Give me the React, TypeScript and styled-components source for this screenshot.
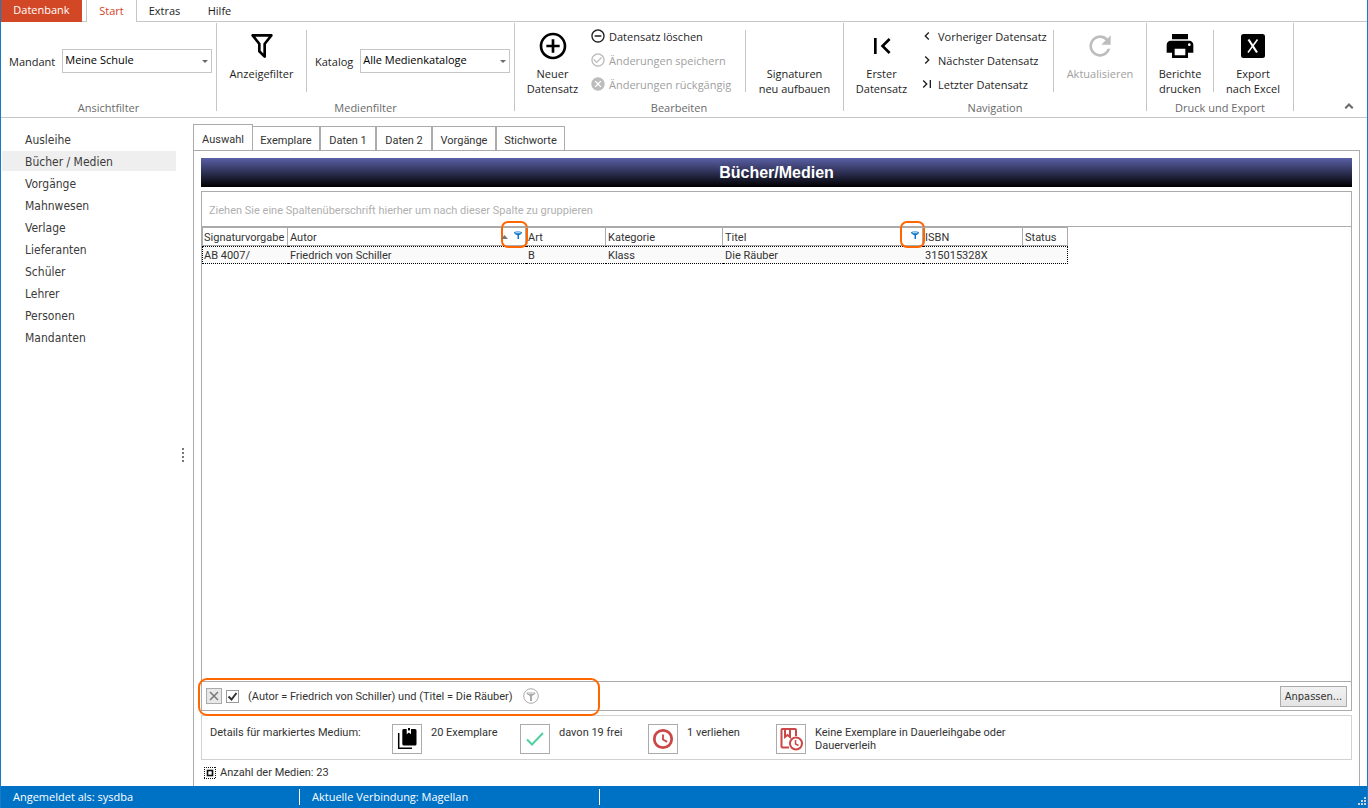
import React from "react";
import styled, { createGlobalStyle, css } from "styled-components";

const uiFont = `"Open Sans", "Noto Sans", sans-serif`;
const navFont = `"DejaVu Sans Condensed", "Noto Sans", sans-serif`;
const gridFont = `Roboto, "Noto Sans", sans-serif`;
const line = "#ababab";
const ribbonLine = "#c6c6c6";
const orange = "#ff6600";

const GlobalStyle = createGlobalStyle`
  * { box-sizing: border-box; }
  body { margin: 0; background: #fff; }
  button, select, input { font: inherit; color: inherit; margin: 0; }
`;

/* ---------- shell ---------- */

const Window = styled.div`
  display: flex;
  flex-direction: column;
  min-height: 100vh;
  border: solid #1979ca;
  border-width: 0 1px;
  background: #fff;
  color: #1e1e1e;
  font: 11px/15px ${uiFont};
`;

const TabStrip = styled.nav`
  display: flex;
  height: 22px;
  border-bottom: 1px solid ${ribbonLine};
`;

const FileButton = styled.button`
  width: 81px;
  height: 22px;
  margin-right: 4px;
  padding: 0 0 4px;
  border: 0;
  background: #d24726;
  color: #fff;
`;

const RibbonTab = styled.button<{ $active?: boolean }>`
  width: ${(p) => (p.$active ? 51 : 55)}px;
  height: ${(p) => (p.$active ? 22 : 21)}px;
  padding: 0;
  border: 0;
  background: #fff;
  ${(p) =>
    p.$active &&
    css`
      padding-bottom: 1px;
      border: solid ${ribbonLine};
      border-width: 0 1px;
      color: #d24726;
    `}
`;

/* ---------- ribbon ---------- */

const Ribbon = styled.section`
  display: flex;
  height: 96px;
  padding-top: 1px;
  border-bottom: 1px solid ${ribbonLine};
`;

const RibbonGroup = styled.div<{ $width: number }>`
  display: flex;
  flex-direction: column;
  width: ${(p) => p.$width}px;
  height: 88px;
  border-right: 1px solid ${ribbonLine};
`;

const GroupBody = styled.div`
  display: flex;
  flex: none;
  height: 76px;
  padding-top: 7px;
`;

const GroupTitle = styled.div`
  line-height: 18px;
  text-align: center;
  color: #6a6a6a;
`;

const Divider = styled.div`
  width: 1px;
  height: 62px;
  background: ${ribbonLine};
`;

const Field = styled.label`
  display: flex;
  align-items: center;
  gap: 7px;
  height: 62px;
  padding-left: 8px;
`;

const SelectWrap = styled.span`
  position: relative;
  display: block;
  &::after {
    content: "";
    position: absolute;
    right: 4px;
    top: 11px;
    border: 3px solid transparent;
    border-top-color: #6a6a6a;
    border-bottom: 0;
    pointer-events: none;
  }
`;

const Select = styled.select`
  display: block;
  appearance: none;
  width: 150px;
  height: 24px;
  padding: 0 14px 3px 2px;
  border: 1px solid ${ribbonLine};
  border-radius: 0;
  background: #fff;
  color: #000;
`;

const BigButton = styled.button<{ $width: number }>`
  display: flex;
  flex-direction: column;
  align-items: center;
  gap: 4px;
  width: ${(p) => p.$width}px;
  padding: 0;
  border: 0;
  background: none;
  white-space: nowrap;
  &:disabled { color: #a0a0a0; }
  svg { flex: none; color: #000; }
`;

const IconSpace = styled.span`
  height: 32px;
`;

const SmallStack = styled.div<{ $width: number }>`
  display: flex;
  flex-direction: column;
  width: ${(p) => p.$width}px;
  margin-top: -6px;
`;

const SmallButton = styled.button`
  display: flex;
  align-items: center;
  gap: 3px;
  height: 24px;
  padding: 0;
  border: 0;
  background: none;
  white-space: nowrap;
  svg { flex: none; }
  &:disabled { color: #a0a0a0; }
  &:disabled svg { color: #bdbdbd; }
`;

const CollapseButton = styled.button`
  align-self: flex-end;
  margin: 0 9px 2px auto;
  padding: 0;
  border: 0;
  background: none;
  color: #6a6a6a;
  line-height: 0;
`;

/* ---------- main ---------- */

const Main = styled.main`
  display: flex;
  flex: 1;
`;

const Sidebar = styled.nav`
  width: 175px;
  padding: 11px 0 0 1px;
  font: 12px/20px ${navFont};
`;

const SideLink = styled.a<{ $active?: boolean }>`
  display: block;
  height: 20px;
  margin-bottom: 2px;
  padding: 1px 0 0 23px;
  background: ${(p) => (p.$active ? "#efefef" : "none")};
  color: #3b3b3b;
  text-decoration: none;
`;

const Splitter = styled.div`
  display: flex;
  flex-direction: column;
  align-items: center;
  justify-content: center;
  gap: 2px;
  width: 17px;
  padding: 6px 4px 0 0;
`;

const Dot = styled.i`
  width: 2px;
  height: 2px;
  background: #777;
`;

const Content = styled.section`
  display: flex;
  flex: 1;
  flex-direction: column;
  min-width: 0;
  margin-right: 7px;
  padding-top: 6px;
  color: #333;
  font: 11px/13px ${gridFont};
`;

const Tabs = styled.div`
  display: flex;
  align-items: flex-end;
  height: 26px;
`;

const Tab = styled.button<{ $width: number; $active?: boolean }>`
  width: ${(p) => p.$width}px;
  height: 25px;
  margin-bottom: -1px;
  padding: 3px 0 0;
  border: 1px solid ${line};
  background: #fff;
  ${(p) =>
    p.$active &&
    css`
      height: 27px;
      margin-right: -1px;
      border-bottom-color: #fff;
    `}
`;

const Panel = styled.div`
  display: flex;
  flex: 1;
  flex-direction: column;
  padding: 7px 7px 0;
  border: 1px solid ${line};
  border-bottom: 0;
`;

const Title = styled.h1`
  margin: 0 0 4px;
  height: 29px;
  background: linear-gradient(#5a60a6, #000);
  color: #fff;
  font: bold 16px/29px "Liberation Sans", Arial, sans-serif;
  text-align: center;
`;

const Grid = styled.div`
  display: flex;
  flex: 1;
  flex-direction: column;
  border: 1px solid ${line};
`;

const GroupHint = styled.div`
  height: 35px;
  padding-left: 7px;
  border-bottom: 1px solid ${line};
  color: #b0b0b0;
  line-height: 37px;
`;

const Table = styled.table`
  width: 866px;
  border-collapse: separate;
  border-spacing: 0;
  table-layout: fixed;
`;

const HeadCell = styled.th<{ $width: number }>`
  position: relative;
  width: ${(p) => p.$width}px;
  height: 19px;
  padding: 1px 0 0 2px;
  border: solid ${line};
  border-width: 1px 1px 1px 0;
  font-weight: normal;
  text-align: left;
  white-space: nowrap;
  &:first-child { padding-left: 1px; border-left-width: 1px; }
`;

const Cell = styled.td`
  height: 18px;
  padding: 0 0 0 2px;
  border: 1px dotted #000;
  border-width: 1px 0;
  background: #fafafa;
  white-space: nowrap;
  &:first-child { padding-left: 1px; border-left-width: 1px; }
  &:last-child { border-right-width: 1px; }
`;

const HeadTools = styled.span<{ $wide?: boolean }>`
  position: absolute;
  right: -3px;
  top: -7px;
  display: flex;
  align-items: center;
  justify-content: flex-end;
  gap: 6px;
  width: ${(p) => (p.$wide ? 27 : 25)}px;
  height: 27px;
  padding-right: 4px;
  border: 2px solid ${orange};
  border-radius: 7px;
  svg { flex: none; }
`;

const SortMark = styled.svg`
  margin-top: 4px;
`;

const FilterButton = styled.button`
  padding: 0;
  border: 0;
  background: none;
  line-height: 0;
`;

const FilterBar = styled.div`
  position: relative;
  display: flex;
  align-items: center;
  height: 29px;
  margin-top: auto;
  padding: 0 4px;
  border-top: 1px solid ${line};
`;

const Highlight = styled.span`
  position: absolute;
  left: -4px;
  top: -4px;
  width: 402px;
  height: 38px;
  border: 2px solid ${orange};
  border-radius: 9px;
  pointer-events: none;
`;

const ClearButton = styled.button`
  width: 16px;
  height: 16px;
  margin-right: 4px;
  padding: 0 0 0 2px;
  border: 1px solid ${line};
  background: #e8e8e8;
  line-height: 0;
  text-align: left;
`;

const Check = styled.input`
  appearance: none;
  width: 13px;
  height: 13px;
  border: 1px solid #9a9a9a;
  background: #fff
    url("data:image/svg+xml,%3Csvg xmlns='http://www.w3.org/2000/svg' viewBox='0 0 11 11'%3E%3Cpath d='M1.5 5.5l3 3 5-6.5' fill='none' stroke='%23333' stroke-width='2'/%3E%3C/svg%3E");
`;

const FilterText = styled.label`
  display: flex;
  align-items: center;
  gap: 9px;
  margin-right: 10px;
`;

const CustomizeButton = styled.button`
  width: 67px;
  height: 21px;
  margin-left: auto;
  padding: 0;
  border: 1px solid ${line};
  background: linear-gradient(#f2f2f2, #e4e4e4);
  font-family: ${navFont};
`;

const Details = styled.div`
  display: flex;
  height: 45px;
  margin-top: 4px;
  padding: 8px;
  border: 1px solid #d2d2d2;
`;

const DetailsLabel = styled.span`
  width: 182px;
  padding-top: 2px;
`;

const DetailItem = styled.div<{ $width: number }>`
  display: flex;
  gap: 9px;
  width: ${(p) => p.$width}px;
`;

const DetailIcon = styled.span`
  display: flex;
  flex: none;
  align-items: center;
  justify-content: center;
  width: 30px;
  height: 30px;
  border: 1px solid ${line};
`;

const DetailText = styled.span`
  padding-top: 2px;
`;

const Count = styled.div`
  display: flex;
  align-items: center;
  gap: 4px;
  margin-bottom: 2px;
  height: 24px;
  padding-left: 2px;
`;

const StatusBar = styled.footer`
  display: flex;
  height: 22px;
  padding: 3px 0;
  background: #0072c6;
  color: #fff;
  line-height: 15px;
`;

const StatusCell = styled.span<{ $width: number }>`
  width: ${(p) => p.$width}px;
  padding-left: 12px;
  border-right: 1px solid #fff;
`;

const Grip = styled.svg`
  align-self: flex-end;
  margin: 0 1px 0 auto;
`;

/* ---------- icons ---------- */

const paths = {
  filter:
    "M15 19.88c.04.3-.06.62-.29.83a1 1 0 0 1-1.41 0L9.29 16.7a1 1 0 0 1-.29-.83v-5.12L4.21 4.62A1 1 0 0 1 4.38 3.22C4.57 3.08 4.78 3 5 3h14c.22 0 .43.08.62.22a1 1 0 0 1 .17 1.4L15 10.75zM7.04 5L11 10.06v5.52l2 2v-7.53L16.96 5z",
  add: "M13 7h-2v4H7v2h4v4h2v-4h4v-2h-4V7zm-1-5C6.48 2 2 6.48 2 12s4.48 10 10 10 10-4.48 10-10S17.52 2 12 2zm0 18c-4.41 0-8-3.59-8-8s3.59-8 8-8 8 3.59 8 8-3.59 8-8 8z",
  remove:
    "M7 11v2h10v-2H7zm5-9C6.48 2 2 6.48 2 12s4.48 10 10 10 10-4.48 10-10S17.52 2 12 2zm0 18c-4.41 0-8-3.59-8-8s3.59-8 8-8 8 3.59 8 8-3.59 8-8 8z",
  check:
    "M16.59 7.58L10 14.17l-3.59-3.58L5 12l5 5 8-8zM12 2C6.48 2 2 6.48 2 12s4.48 10 10 10 10-4.48 10-10S17.52 2 12 2zm0 18c-4.42 0-8-3.58-8-8s3.58-8 8-8 8 3.58 8 8-3.58 8-8 8z",
  cancel:
    "M12 2C6.47 2 2 6.47 2 12s4.47 10 10 10 10-4.47 10-10S17.53 2 12 2zm5 13.59L15.59 17 12 13.41 8.41 17 7 15.59 10.59 12 7 8.41 8.41 7 12 10.59 15.59 7 17 8.41 13.41 12z",
  first: "M18.41 16.59L13.82 12l4.59-4.59L17 6l-6 6 6 6zM6 6h2v12H6z",
  last: "M5.59 7.41L10.18 12l-4.59 4.59L7 18l6-6-6-6zM16 6h2v12h-2z",
  prev: "M15.41 7.41L14 6l-6 6 6 6 1.41-1.41L10.83 12z",
  next: "M10 6L8.59 7.41 13.17 12l-4.58 4.59L10 18l6-6z",
  up: "M12 8l-6 6 2 2 4-4 4 4 2-2z",
  refresh:
    "M17.65 6.35A7.96 7.96 0 0 0 12 4a8 8 0 1 0 7.73 10h-2.08A6 6 0 1 1 12 6c1.66 0 3.14.69 4.22 1.78L13 11h7V4z",
  print:
    "M19 8H5c-1.66 0-3 1.34-3 3v6h4v4h12v-4h4v-6c0-1.66-1.34-3-3-3zm-3 11H8v-5h8v5zm3-7c-.55 0-1-.45-1-1s.45-1 1-1 1 .45 1 1-.45 1-1 1zm-1-9H6v4h12V3z",
  clock:
    "M12 1a11 11 0 1 0 0 22 11 11 0 0 0 0-22zm0 19a8 8 0 1 1 0-16 8 8 0 0 1 0 16zM11 7v6l5 3 1-1.7-4-2.3V7z",
};

const Icon = ({ name, size, color }: { name: keyof typeof paths; size: number; color?: string }) => (
  <svg width={size} height={size} viewBox="0 0 24 24" fill={color ?? "currentColor"} fillRule="evenodd" aria-hidden>
    <path d={paths[name]} />
  </svg>
);

const ExcelIcon = () => (
  <svg width="32" height="32" viewBox="0 0 32 32" aria-hidden>
    <rect x="4" y="4" width="24" height="24" rx="2.5" fill="#000" />
    <path d="M11.5 9.500l8.500 13" stroke="#fff" strokeWidth="2.2" fill="none" />
    <path d="M20.5 9.500l-9.500 13" stroke="#fff" strokeWidth="1.5" fill="none" />
  </svg>
);

const BooksIcon = () => (
  <svg width="22" height="22" viewBox="0 0 22 22" aria-hidden>
    <path d="M2.700 5v15.200H16" stroke="#000" strokeWidth="1.5" fill="none" />
    <path d="M7.500 1H19a1.500 1.500 0 0 1 1.500 1.500v13.500a1.500 1.500 0 0 1-1.500 1.500H8A1.700 1.700 0 0 1 6.300 16V2.500A1.500 1.500 0 0 1 7.500 1z" />
    <path d="M10.700 1h4.300v5.300l-2.150-1.800-2.150 1.800z" fill="#fff" />
    <path d="M12 0h2v2.500h-2z" />
  </svg>
);

const TickIcon = () => (
  <svg width="20" height="16" viewBox="0 0 20 16" aria-hidden>
    <path d="M2 8.500l5 5L18 2" stroke="#4fd0a0" strokeWidth="2" fill="none" />
  </svg>
);

const LoanIcon = () => (
  <svg width="24" height="24" viewBox="0 0 24 24" fill="none" stroke="#cc4747" strokeWidth="2" aria-hidden>
    <path d="M10 20.500H3.500a1 1 0 0 1-1-1V3a1 1 0 0 1 1-1H16a1 1 0 0 1 1 1v6" />
    <path d="M6 2v8l2.500-2L11 10V2" />
    <circle cx="17" cy="16.500" r="6" />
    <path d="M16.500 13v4l3 1.500" strokeWidth="1.5" />
  </svg>
);

const FunnelIcon = () => (
  <svg width="8" height="8" viewBox="0 0 8 8" aria-hidden>
    <path d="M0 1.500C0 .3 8 .3 8 1.500 8 3 5 4 5 4.500V8H3.500V4.500C3.500 4 0 3 0 1.500z" fill="#0f78c8" />
    <path d="M1.500 1.700h5" stroke="#fff" strokeWidth=".8" />
  </svg>
);

const FunnelBadge = () => (
  <svg width="16" height="16" viewBox="0 0 16 16" aria-hidden>
    <circle cx="8" cy="8" r="7.300" fill="#fff" stroke="#aaa" />
    <path d="M3.500 5c0-1.500 9-1.500 9 0 0 1.500-3.500 2.500-3.500 3.500V13H7V8.500C7 7.500 3.500 6.500 3.500 5z" fill="#aaa" />
    <path d="M5 5h6" stroke="#fff" />
  </svg>
);

const CountIcon = () => (
  <svg width="13" height="13" viewBox="0 0 13 13" fill="none" stroke="#111" aria-hidden>
    <path d="M1 1.500h12M1 12.500h12M1.500 1v12M12.500 1v12" strokeDasharray="1 1" shapeRendering="crispEdges" />
    <rect x="4.5" y="4.5" width="5" height="5" strokeWidth="1.6" />
  </svg>
);

/* ---------- data ---------- */

const sideItems = ["Ausleihe", "Bücher / Medien", "Vorgänge", "Mahnwesen", "Verlage", "Lieferanten", "Schüler", "Lehrer", "Personen", "Mandanten"];

const tabs: [string, number][] = [
  ["Auswahl", 60],
  ["Exemplare", 68],
  ["Daten 1", 56],
  ["Daten 2", 56],
  ["Vorgänge", 64],
  ["Stichworte", 69],
];

const columns: { name: string; width: number; value: string; filtered?: boolean; sorted?: boolean }[] = [
  { name: "Signaturvorgabe", width: 86, value: "AB 4007/" },
  { name: "Autor", width: 238, value: "Friedrich von Schiller", filtered: true, sorted: true },
  { name: "Art", width: 80, value: "B" },
  { name: "Kategorie", width: 117, value: "Klass" },
  { name: "Titel", width: 200, value: "Die Räuber", filtered: true },
  { name: "ISBN", width: 100, value: "315015328X" },
  { name: "Status", width: 45, value: "" },
];

export default function App() {
  return (
    <Window>
      <GlobalStyle />
      <TabStrip>
        <FileButton>Datenbank</FileButton>
        <RibbonTab $active>Start</RibbonTab>
        <RibbonTab>Extras</RibbonTab>
        <RibbonTab>Hilfe</RibbonTab>
      </TabStrip>

      <Ribbon>
        <RibbonGroup $width={216}>
          <GroupBody>
            <Field>
              Mandant
              <SelectWrap>
                <Select><option>Meine Schule</option></Select>
              </SelectWrap>
            </Field>
          </GroupBody>
          <GroupTitle>Ansichtfilter</GroupTitle>
        </RibbonGroup>

        <RibbonGroup $width={298}>
          <GroupBody>
            <BigButton $width={89}><Icon name="filter" size={32} />Anzeigefilter</BigButton>
            <Divider />
            <Field>
              Katalog
              <SelectWrap>
                <Select><option>Alle Medienkataloge</option></Select>
              </SelectWrap>
            </Field>
          </GroupBody>
          <GroupTitle>Medienfilter</GroupTitle>
        </RibbonGroup>

        <RibbonGroup $width={329}>
          <GroupBody>
            <BigButton $width={75}><Icon name="add" size={32} /><span>Neuer<br />Datensatz</span></BigButton>
            <SmallStack $width={155}>
              <SmallButton><Icon name="remove" size={16} />Datensatz löschen</SmallButton>
              <SmallButton disabled><Icon name="check" size={16} />Änderungen speichern</SmallButton>
              <SmallButton disabled><Icon name="cancel" size={16} />Änderungen rückgängig</SmallButton>
            </SmallStack>
            <Divider />
            <BigButton $width={97}><IconSpace /><span>Signaturen<br />neu aufbauen</span></BigButton>
          </GroupBody>
          <GroupTitle>Bearbeiten</GroupTitle>
        </RibbonGroup>

        <RibbonGroup $width={303}>
          <GroupBody>
            <BigButton $width={75}><Icon name="first" size={32} /><span>Erster<br />Datensatz</span></BigButton>
            <SmallStack $width={134}>
              <SmallButton><Icon name="prev" size={16} />Vorheriger Datensatz</SmallButton>
              <SmallButton><Icon name="next" size={16} />Nächster Datensatz</SmallButton>
              <SmallButton><Icon name="last" size={16} />Letzter Datensatz</SmallButton>
            </SmallStack>
            <Divider />
            <BigButton $width={92} disabled><Icon name="refresh" size={32} color="#bdbdbd" />Aktualisieren</BigButton>
          </GroupBody>
          <GroupTitle>Navigation</GroupTitle>
        </RibbonGroup>

        <RibbonGroup $width={147}>
          <GroupBody>
            <BigButton $width={66}><Icon name="print" size={32} /><span>Berichte<br />drucken</span></BigButton>
            <Divider />
            <BigButton $width={78}><ExcelIcon /><span>Export<br />nach Excel</span></BigButton>
          </GroupBody>
          <GroupTitle>Druck und Export</GroupTitle>
        </RibbonGroup>
        <CollapseButton aria-label="Menüband minimieren">
          <Icon name="up" size={18} />
        </CollapseButton>
      </Ribbon>

      <Main>
        <Sidebar>
          {sideItems.map((item) => (
            <SideLink key={item} href="#" $active={item === "Bücher / Medien"}>{item}</SideLink>
          ))}
        </Sidebar>
        <Splitter><Dot /><Dot /><Dot /><Dot /></Splitter>

        <Content>
          <Tabs>
            {tabs.map(([name, width], i) => (
              <Tab key={name} $width={width} $active={i === 0}>{name}</Tab>
            ))}
          </Tabs>
          <Panel>
            <Title>Bücher/Medien</Title>
            <Grid>
              <GroupHint>Ziehen Sie eine Spaltenüberschrift hierher um nach dieser Spalte zu gruppieren</GroupHint>
              <Table>
                <thead>
                  <tr>
                    {columns.map((c) => (
                      <HeadCell key={c.name} $width={c.width} scope="col">
                        {c.name}
                        {c.filtered && (
                          <HeadTools $wide={c.sorted}>
                            {c.sorted && (
                              <SortMark width="7" height="4" viewBox="0 0 7 4" aria-hidden>
                                <path d="M0 4L3.500 0 7 4z" fill="#777" />
                              </SortMark>
                            )}
                            <FilterButton aria-label={`${c.name} filtern`}><FunnelIcon /></FilterButton>
                          </HeadTools>
                        )}
                      </HeadCell>
                    ))}
                  </tr>
                </thead>
                <tbody>
                  <tr>{columns.map((c) => <Cell key={c.name}>{c.value}</Cell>)}</tr>
                </tbody>
              </Table>
              <FilterBar>
                <ClearButton aria-label="Filter löschen">
                  <svg width="10" height="10" viewBox="0 0 10 10" aria-hidden>
                    <path d="M1 1l8 8M9 1L1 9" stroke="#777" strokeWidth="1.5" />
                  </svg>
                </ClearButton>
                <FilterText>
                  <Check type="checkbox" defaultChecked />
                  (Autor = Friedrich von Schiller) und (Titel = Die Räuber)
                </FilterText>
                <FilterButton aria-label="Filter"><FunnelBadge /></FilterButton>
                <CustomizeButton>Anpassen...</CustomizeButton>
                <Highlight />
              </FilterBar>
            </Grid>
            <Details>
              <DetailsLabel>Details für markiertes Medium:</DetailsLabel>
              <DetailItem $width={128}><DetailIcon><BooksIcon /></DetailIcon><DetailText>20 Exemplare</DetailText></DetailItem>
              <DetailItem $width={128}><DetailIcon><TickIcon /></DetailIcon><DetailText>davon 19 frei</DetailText></DetailItem>
              <DetailItem $width={128}><DetailIcon><Icon name="clock" size={22} color="#cc4747" /></DetailIcon><DetailText>1 verliehen</DetailText></DetailItem>
              <DetailItem $width={250}><DetailIcon><LoanIcon /></DetailIcon><DetailText>Keine Exemplare in Dauerleihgabe oder<br />Dauerverleih</DetailText></DetailItem>
            </Details>
            <Count><CountIcon />Anzahl der Medien: 23</Count>
          </Panel>
        </Content>
      </Main>

      <StatusBar>
        <StatusCell $width={299}>Angemeldet als: sysdba</StatusCell>
        <StatusCell $width={300}>Aktuelle Verbindung: Magellan</StatusCell>
        <Grip width="8" height="8" viewBox="0 0 8 8" fill="#c8d4de" aria-hidden>
          <path d="M6 0h2v2H6zM3 3h2v2H3zM6 3h2v2H6zM0 6h2v2H0zM3 6h2v2H3zM6 6h2v2H6z" />
        </Grip>
      </StatusBar>
    </Window>
  );
}
